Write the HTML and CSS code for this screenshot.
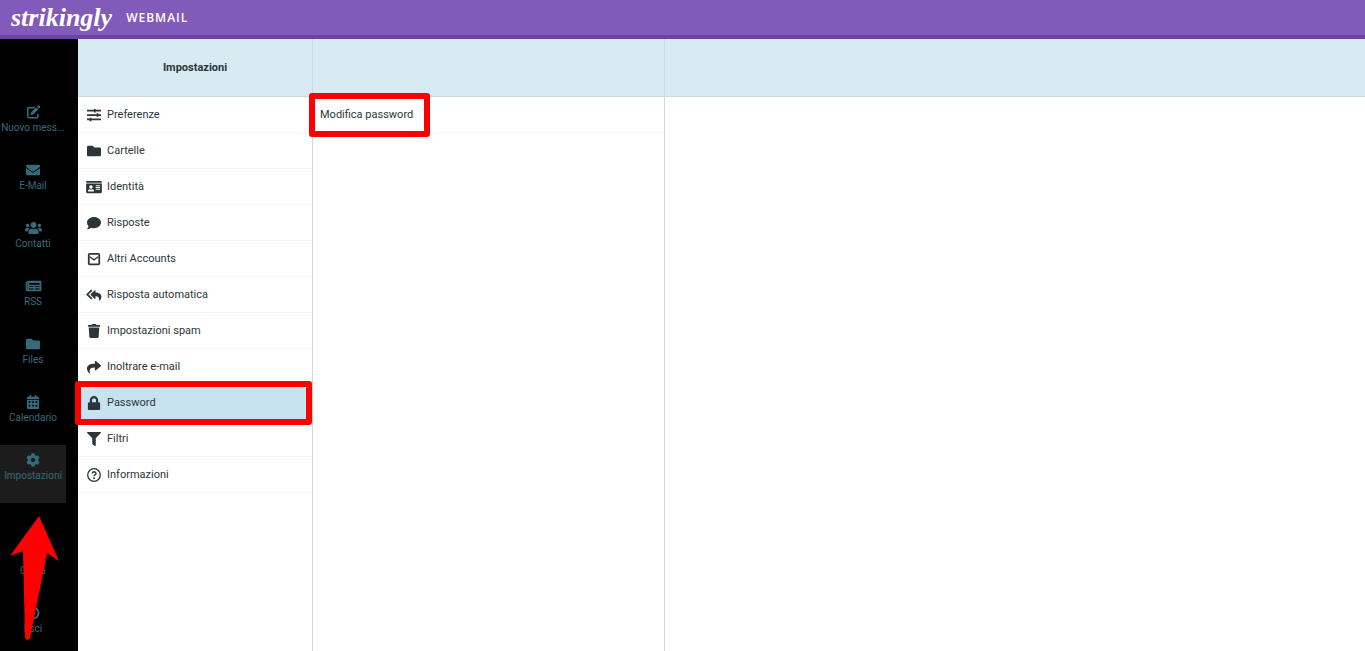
FILE: index.html
```
<!DOCTYPE html>
<html lang="it">
<head>
  <meta charset="UTF-8">
  <meta name="viewport" content="width=device-width, initial-scale=1.0">
  <title>Strikingly Webmail - Impostazioni</title>
  <link rel="stylesheet" href="styles.css">
</head>
<body>
  <header class="topbar">
    <a href="#" class="logo">strikingly</a>
    <span class="product">WEBMAIL</span>
  </header>

  <div class="layout">
    <nav class="taskmenu">
      <a href="#">
        <svg class="wide" viewBox="0 0 16 16"><path d="M9.500 3H2.500Q1.500 3 1.500 4v9.500q0 1 1 1H12q1 0 1-1V10" fill="none" stroke="currentColor" stroke-width="1.800"/><path d="M5 8.500 11 2.500 13.500 5l-6 6-3 .500zM11.800 1.700l1-1q.700-.600 1.400 0l1.100 1.100q.600.700 0 1.400l-1 1z"/></svg>
        <span>Nuovo mess...</span>
      </a>
      <a href="#">
        <svg viewBox="0 0 512 512"><path d="M502.3 190.8c3.9-3.1 9.7-.2 9.7 4.7V400c0 26.5-21.5 48-48 48H48c-26.5 0-48-21.500-48-48V195.600c0-5 5.700-7.800 9.700-4.700 22.400 17.400 52.100 39.500 154.100 113.600 21.100 15.400 56.700 47.800 92.200 47.600 35.700.3 72-32.800 92.300-47.600 102-74.100 131.600-96.300 154-113.700zM256 320c23.200.4 56.600-29.200 73.400-41.400 132.700-96.300 142.800-104.700 173.400-128.700 5.800-4.500 9.200-11.500 9.200-18.900v-19c0-26.500-21.500-48-48-48H48c-26.500 0-48 21.500-48 48v19c0 7.400 3.400 14.300 9.200 18.900 30.600 23.900 40.700 32.400 173.400 128.700 16.800 12.200 50.200 41.800 73.400 41.400z"/></svg>
        <span>E-Mail</span>
      </a>
      <a href="#">
        <svg class="wide" viewBox="0 0 640 512"><path d="M96 224c35.3 0 64-28.7 64-64s-28.7-64-64-64-64 28.7-64 64 28.7 64 64 64zm448 0c35.3 0 64-28.7 64-64s-28.7-64-64-64-64 28.7-64 64 28.7 64 64 64zm32 32h-64c-17.6 0-33.5 7.1-45.1 18.6 40.3 22.1 68.9 62 75.1 109.4h66c17.7 0 32-14.3 32-32v-32c0-35.3-28.7-64-64-64zm-256 0c61.9 0 112-50.1 112-112S381.9 32 320 32 208 82.1 208 144s50.1 112 112 112zm76.8 32h-8.3c-20.8 10-43.9 16-68.5 16s-47.6-6-68.5-16h-8.3C179.6 288 128 339.6 128 403.2V432c0 26.5 21.5 48 48 48h288c26.5 0 48-21.5 48-48v-28.8c0-63.6-51.6-115.2-115.2-115.2zm-223.7-13.4C161.5 263.1 145.6 256 128 256H64c-35.3 0-64 28.7-64 64v32c0 17.7 14.3 32 32 32h65.900c6.300-47.400 34.900-87.300 75.200-109.400z"/></svg>
        <span>Contatti</span>
      </a>
      <a href="#">
        <svg class="wide" viewBox="0 0 576 512"><path fill-rule="evenodd" d="M552 64H88c-13 0-24 11-24 24v8H24c-13 0-24 11-24 24v272c0 31 25 56 56 56h472c26 0 48-22 48-48V88c0-13-11-24-24-24zM48 392V144h16v248q-8 16-16 0zM128 144h384v64H128zM128 264h160v30H128zm208 0h176v30H336zM128 350h160v30H128zm208 0h176v30H336z"/></svg>
        <span>RSS</span>
      </a>
      <a href="#">
        <svg viewBox="0 0 512 512"><path d="M464 128H272l-64-64H48C21.500 64 0 85.500 0 112v288c0 26.500 21.500 48 48 48h416c26.500 0 48-21.500 48-48V176c0-26.500-21.500-48-48-48z"/></svg>
        <span>Files</span>
      </a>
      <a href="#">
        <svg viewBox="0 0 512 512"><path fill-rule="evenodd" d="M80 64h48V16q0-16 16-16h32q16 0 16 16v48h128V16q0-16 16-16h32q16 0 16 16v48h48q48 0 48 48v32H32v-32q0-48 48-48zM32 176h448v288q0 48-48 48H80q-48 0-48-48zM96 232v56h64v-56zm128 0v56h64v-56zm128 0v56h64v-56zM96 360v56h64v-56zm128 0v56h64v-56zm128 0v56h64v-56z"/></svg>
        <span>Calendario</span>
      </a>
      <a href="#" class="selected">
        <svg viewBox="0 0 512 512"><path d="M487.4 315.7l-42.6-24.6c4.3-23.2 4.3-47 0-70.2l42.6-24.6c4.9-2.8 7.1-8.6 5.5-14-11.1-35.6-30-67.8-54.7-94.6-3.8-4.1-10-5.1-14.8-2.3L380.8 110c-17.9-15.4-38.5-27.3-60.8-35.1V25.8c0-5.6-3.9-10.5-9.4-11.7-36.7-8.2-74.3-7.8-109.2 0-5.5 1.2-9.4 6.1-9.4 11.7V75c-22.2 7.9-42.8 19.8-60.8 35.1L88.7 85.5c-4.9-2.8-11-1.9-14.8 2.3-24.7 26.7-43.6 58.9-54.7 94.6-1.7 5.4.6 11.2 5.5 14L67.3 221c-4.3 23.2-4.3 47 0 70.2l-42.6 24.6c-4.9 2.8-7.1 8.6-5.5 14 11.1 35.6 30 67.8 54.7 94.6 3.8 4.1 10 5.1 14.8 2.3l42.6-24.6c17.9 15.4 38.5 27.3 60.8 35.1v49.2c0 5.6 3.9 10.5 9.4 11.7 36.7 8.2 74.3 7.8 109.2 0 5.5-1.2 9.4-6.1 9.4-11.7v-49.2c22.2-7.9 42.8-19.8 60.8-35.1l42.6 24.6c4.9 2.8 11 1.9 14.8-2.3 24.7-26.7 43.6-58.9 54.7-94.6 1.5-5.5-.7-11.3-5.6-14.1zM256 336c-44.1 0-80-35.9-80-80s35.9-80 80-80 80 35.9 80 80-35.9 80-80 80z"/></svg>
        <span>Impostazioni</span>
      </a>
      <div class="special">
        <a href="#">
          <svg viewBox="0 0 16 16"><circle cx="8" cy="8" r="6" fill="none" stroke="currentColor" stroke-width="3"/></svg>
          <span>Guida</span>
        </a>
        <a href="#">
          <svg viewBox="0 0 16 16"><path d="M4.500 2.700a6.300 6.300 0 1 0 7 0M8 1v7" fill="none" stroke="currentColor" stroke-width="2.200" stroke-linecap="round"/></svg>
          <span>Esci</span>
        </a>
        <svg class="arrow" viewBox="0 0 50 125"><path d="M29 0 49 45 37 37 20 122Q18 126 15 122L13 35 0 40z"/></svg>
      </div>
    </nav>

    <section class="column">
      <h1 class="column-header">Impostazioni</h1>
      <ul class="listing">
        <li><a href="#">
          <svg viewBox="0 0 16 16"><path d="M0 3h16M0 8h16M0 13h16" stroke="currentColor" stroke-width="2"/><path d="M8 1h2v4H8zM11 6h2v4h-2zM3 11h2v4H3z"/></svg>
          Preferenze</a></li>
        <li><a href="#">
          <svg viewBox="0 0 512 512"><path d="M464 128H272l-64-64H48C21.500 64 0 85.500 0 112v288c0 26.500 21.500 48 48 48h416c26.500 0 48-21.500 48-48V176c0-26.500-21.500-48-48-48z"/></svg>
          Cartelle</a></li>
        <li><a href="#">
          <svg viewBox="32 0 512 512" overflow="visible"><path fill-rule="evenodd" d="M48 32h480q48 0 48 48v16H0V80q0-48 48-48zM0 128h576v304q0 48-48 48H48q-48 0-48-48zM176 192a64 64 0 1 0 0 128 64 64 0 0 0 0-128zM66 396q0 20 16 20h188q16 0 16-20 0-48-56-60-54 24-108 0-56 12-56 60zM352 192h160v32H352zm0 64h160v32H352zm0 64h160v32H352z"/></svg>
          Identità</a></li>
        <li><a href="#">
          <svg viewBox="0 0 512 512"><path d="M256 32C114.6 32 0 125.1 0 240c0 49.6 21.4 95 57 130.7C44.5 421.1 2.7 466 2.2 466.5c-2.2 2.3-2.8 5.7-1.5 8.7S4.8 480 8 480c66.3 0 116-31.8 140.6-51.4 32.7 12.3 69 19.4 107.4 19.4 141.4 0 256-93.1 256-208S397.4 32 256 32z"/></svg>
          Risposte</a></li>
        <li><a href="#">
          <svg viewBox="0 0 16 16"><rect x="2" y="2" width="12" height="12" rx="1" fill="none" stroke="currentColor" stroke-width="2"/><path d="M3 5.500 8 9l5-3.500" fill="none" stroke="currentColor" stroke-width="1.500"/></svg>
          Altri Accounts</a></li>
        <li><a href="#">
          <svg viewBox="0 0 16 16" overflow="visible"><path d="M4.500 6.500 9 2.500Q9.700 2 9.700 3v2.200Q16.500 5.500 16.500 10q0 3-2.200 4.500-.8.300-.5-.5Q14.500 9.700 9.700 9.500V12q0 1-.7.500L4.500 8.300q-.8-.9 0-1.800z"/><path d="M5.500 2.300.3 7.300 5.500 12.300" fill="none" stroke="currentColor" stroke-width="2"/></svg>
          Risposta automatica</a></li>
        <li><a href="#">
          <svg viewBox="0 0 448 512"><path d="M432 32H312l-9.4-18.7A24 24 0 0 0 281.1 0H166.8a23.72 23.72 0 0 0-21.4 13.3L136 32H16A16 16 0 0 0 0 48v32a16 16 0 0 0 16 16h416a16 16 0 0 0 16-16V48a16 16 0 0 0-16-16zM53.2 467a48 48 0 0 0 47.9 45h245.8a48 48 0 0 0 47.9-45L416 128H32z"/></svg>
          Impostazioni spam</a></li>
        <li><a href="#">
          <svg viewBox="0 0 512 512"><path d="M503.691 189.836L327.687 37.851C312.281 24.546 288 35.347 288 56.015v80.053C127.371 137.907 0 170.1 0 322.326c0 61.441 39.581 122.309 83.333 154.132 13.653 9.931 33.111-2.533 28.077-18.631C66.066 312.814 132.917 274.316 288 272.085V360c0 20.7 24.3 31.453 39.687 18.164l176.004-152c11.071-9.562 11.086-26.753 0-36.328z"/></svg>
          Inoltrare e-mail</a></li>
        <li class="selected marked"><a href="#">
          <svg viewBox="0 0 448 512"><path d="M400 224h-24v-72C376 68.2 307.8 0 224 0S72 68.2 72 152v72H48c-26.5 0-48 21.5-48 48v192c0 26.5 21.5 48 48 48h352c26.5 0 48-21.5 48-48V272c0-26.5-21.500-48-48-48zm-104 0H152v-72c0-39.700 32.300-72 72-72s72 32.300 72 72v72z"/></svg>
          Password</a></li>
        <li><a href="#">
          <svg viewBox="0 0 512 512"><path d="M487.976 0H24.028C2.71 0-8.047 25.866 7.058 40.971L192 225.941V432c0 7.831 3.821 15.17 10.237 19.662l80 55.98C298.02 518.69 320 507.493 320 487.98V225.941l184.947-184.97C520.021 25.896 509.338 0 487.976 0z"/></svg>
          Filtri</a></li>
        <li><a href="#">
          <svg viewBox="0 0 16 16"><circle cx="8" cy="8" r="7.200" fill="none" stroke="currentColor" stroke-width="1.500"/><path d="M5.800 6.200Q6.300 4.300 8.100 4.300q2.200.1 2.200 1.900 0 1.100-1.300 1.700-.9.500-.9 1.500" fill="none" stroke="currentColor" stroke-width="1.600"/><circle cx="8.100" cy="11.600" r="1.100"/></svg>
          Informazioni</a></li>
      </ul>
    </section>

    <section class="column">
      <div class="column-header"></div>
      <ul class="listing plain">
        <li><a href="#"><span class="marked">Modifica password</span></a></li>
      </ul>
    </section>

    <main class="content">
      <div class="column-header"></div>
    </main>
  </div>
</body>
</html>
```

FILE: styles.css
```
:root {
  --purple: #825ab9;
  --purple-dark: #6b43a3;
  --menu-icon: #376a7b;
  --text: #2c363a;
  --header-bg: #d9ebf2;
  --selected: #c7e3ef;
  --line: #d1d8db;
  --red: #f00;
}
* { box-sizing: border-box; margin: 0; padding: 0; }
body {
  display: flex;
  flex-direction: column;
  height: 100vh;
  overflow: hidden;
  font-family: Roboto, sans-serif;
  font-size: 11px;
  color: var(--text);
  background: #fff;
}
a {
  color: inherit;
  text-decoration: none;
}
svg { fill: currentColor; }

/* Top bar */
.topbar {
  display: flex;
  align-items: center;
  gap: 14px;
  flex: none;
  height: 39px;
  padding-left: 11px;
  background: var(--purple);
  border-bottom: 4px solid var(--purple-dark);
  color: #fff;
}
.logo {
  font: italic bold 26px/34px "Liberation Serif", serif;
}
.product {
  font: 600 12px/16px "Open Sans", sans-serif;
  letter-spacing: 1px;
}

.layout {
  display: grid;
  grid-template-columns: 78px 235px 352px 1fr;
  flex: 1;
  min-height: 0;
}

/* Task menu */
.taskmenu {
  padding: 58px 12px 0 0;
  background: #000;
  color: var(--menu-icon);
}
.taskmenu a {
  display: flex;
  flex-direction: column;
  align-items: center;
  height: 58px;
  padding-top: 8px;
  font-size: 10px;
  line-height: 18px;
  white-space: nowrap;
}
.taskmenu a svg {
  width: 14px;
  height: 14px;
}
.taskmenu a svg.wide { width: 17px; }
.taskmenu .selected { background: #1c1c1c; }
.special {
  position: relative;
  margin-top: 37px;
}
.arrow {
  position: absolute;
  top: -24px;
  left: 10px;
  width: 50px;
  height: 125px;
  fill: var(--red);
}

/* Columns */
.column { border-right: 1px solid var(--line); }
.column-header {
  height: 58px;
  border-bottom: 1px solid var(--line);
  background: var(--header-bg);
  font-size: 11px;
  font-weight: bold;
  line-height: 57px;
  text-align: center;
}
.listing { list-style: none; }
.listing li {
  position: relative;
  height: 36px;
  border-bottom: 1px solid #f1f3f4;
}
.listing a {
  display: flex;
  align-items: center;
  gap: 6px;
  height: 35px;
  padding-left: 9px;
}
.listing.plain a { padding-left: 7px; }
.listing svg {
  width: 14px;
  height: 14px;
}
.listing .selected { background: var(--selected); }

/* Red highlight boxes */
.marked::after {
  content: "";
  position: absolute;
  inset: -4px 0 -5px -3px;
  border: 6px solid var(--red);
  border-radius: 3px;
}
span.marked { position: relative; }
span.marked::after { inset: -15px -17px -16px -11px; }
```
